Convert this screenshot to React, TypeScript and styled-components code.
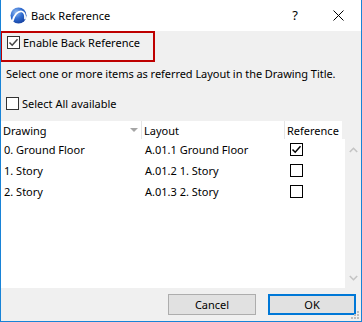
import styled, { createGlobalStyle } from "styled-components";

const GlobalStyle = createGlobalStyle`
    html, body {
        margin: 0;
        padding: 0;
        background: #ffffff;
    }
    body {
        font-family: "Noto Sans", "Open Sans", sans-serif;
        font-size: 11px;
        line-height: 15px;
        color: #000000;
    }
`;

const rows = [
    { drawing: "0. Ground Floor", layout: "A.01.1 Ground Floor", checked: true },
    { drawing: "1. Story", layout: "A.01.2 1. Story", checked: false },
    { drawing: "2. Story", layout: "A.01.3 2. Story", checked: false },
];

function Logo() {
    return (
        <svg width="17" height="17" viewBox="0 0 17 17">
            <defs>
                <radialGradient id="lg" cx="0.35" cy="0.3" r="0.8">
                    <stop offset="0" stopColor="#8fb8ef" />
                    <stop offset="0.5" stopColor="#2f6bd0" />
                    <stop offset="1" stopColor="#123c9a" />
                </radialGradient>
            </defs>
            <circle cx="8.5" cy="8.5" r="8" fill="url(#lg)" />
            <path d="M2.5 14.5 C4 8 8 3.5 12 4.5 C14.5 5.2 15.2 8.5 15 11.5" fill="none" stroke="#ffffff" strokeWidth="1.8" strokeLinecap="round" />
        </svg>
    );
}

function CheckMark({ color }: { color: string }) {
    return (
        <svg width="11" height="11" viewBox="0 0 11 11">
            <path d="M1.5 5.5 L4.2 8.2 L9.5 2.2" fill="none" stroke={color} strokeWidth="1.5" />
        </svg>
    );
}

export default function App() {
    return (
        <>
            <GlobalStyle />
            <Window>
                <TitleBar>
                    <Logo />
                    <Title>Back Reference</Title>
                    <TitleButtons>
                        <Help>?</Help>
                        <svg width="11" height="11" viewBox="0 0 11 11">
                            <path d="M0.5 0.5 L10.5 10.5 M10.5 0.5 L0.5 10.5" stroke="#000" strokeWidth="1" />
                        </svg>
                    </TitleButtons>
                </TitleBar>
                <Content>
                    <Highlight>
                        <CheckRow>
                            <Box $dark={false}>
                                <CheckMark color="#444" />
                            </Box>
                            <span>Enable Back Reference</span>
                        </CheckRow>
                    </Highlight>
                    <Description>Select one or more items as referred Layout in the Drawing Title.</Description>
                    <CheckRow $top={15}>
                        <Box $dark={false} />
                        <span>Select All available</span>
                    </CheckRow>
                    <Table>
                        <HeaderRow>
                            <HeaderCell $w={141}>
                                Drawing
                                <SortArrow />
                            </HeaderCell>
                            <HeaderCell $w={143}>Layout</HeaderCell>
                            <HeaderCell $w={57}>Reference</HeaderCell>
                        </HeaderRow>
                        <BodyWrap>
                            <Body>
                                {rows.map((r) => (
                                    <Row key={r.drawing}>
                                        <Cell $w={141}>{r.drawing}</Cell>
                                        <Cell $w={143}>{r.layout}</Cell>
                                        <RefCell>
                                            <Box $dark>
                                                {r.checked && <CheckMark color="#000" />}
                                            </Box>
                                        </RefCell>
                                    </Row>
                                ))}
                            </Body>
                            <ScrollBar>
                                <svg width="9" height="6" viewBox="0 0 9 6">
                                    <path d="M0.8 5 L4.5 1.3 L8.2 5" fill="none" stroke="#c4c4c4" strokeWidth="1.6" />
                                </svg>
                                <svg width="9" height="6" viewBox="0 0 9 6">
                                    <path d="M0.8 1 L4.5 4.7 L8.2 1" fill="none" stroke="#c4c4c4" strokeWidth="1.6" />
                                </svg>
                            </ScrollBar>
                        </BodyWrap>
                    </Table>
                    <Footer>
                        <Button $primary={false}>Cancel</Button>
                        <Button $primary>OK</Button>
                        <Grip>
                            <svg width="9" height="9" viewBox="0 0 9 9">
                                <rect x="6" y="0" width="2" height="2" fill="#bdbdbd" />
                                <rect x="3" y="3" width="2" height="2" fill="#bdbdbd" />
                                <rect x="6" y="3" width="2" height="2" fill="#bdbdbd" />
                                <rect x="0" y="6" width="2" height="2" fill="#bdbdbd" />
                                <rect x="3" y="6" width="2" height="2" fill="#bdbdbd" />
                                <rect x="6" y="6" width="2" height="2" fill="#bdbdbd" />
                            </svg>
                        </Grip>
                    </Footer>
                </Content>
            </Window>
        </>
    );
}

const Window = styled.div`
    width: 362px;
    height: 322px;
    box-sizing: border-box;
    border: 1px solid #1883d7;
    border-top: none;
    display: flex;
    flex-direction: column;
    background: #ffffff;
    overflow: hidden;
`;

const TitleBar = styled.div`
    height: 31px;
    flex: none;
    display: flex;
    align-items: center;
    padding-left: 9px;
    background: #ffffff;
`;

const Title = styled.span`
    margin-left: 4px;
    font-size: 11px;
    color: #000;
`;

const TitleButtons = styled.div`
    margin-left: auto;
    display: flex;
    align-items: center;
    gap: 35px;
    padding-right: 17px;
`;

const Help = styled.span`
    font-size: 13px;
`;

const Content = styled.div`
    flex: 1;
    display: flex;
    flex-direction: column;
    background: #f0f0f0;
    position: relative;
`;

const Highlight = styled.div`
    width: 155px;
    height: 31px;
    flex: none;
    box-sizing: border-box;
    margin-left: -1px;
    border: 2px solid #be0000;
    padding: 3px 0 0 5px;
`;

const CheckRow = styled.div<{ $top?: number }>`
    display: flex;
    align-items: center;
    gap: 3px;
    height: 13px;
    margin-top: ${(p) => p.$top ?? 0}px;
    margin-left: ${(p) => (p.$top ? 5 : 0)}px;
    white-space: nowrap;
`;

const Box = styled.div<{ $dark: boolean }>`
    width: 13px;
    height: 13px;
    box-sizing: border-box;
    border: 1px solid ${(p) => (p.$dark ? "#000000" : "#333333")};
    background: #ffffff;
    display: flex;
    align-items: center;
    justify-content: center;
    flex: none;
`;

const Description = styled.div`
    margin: 4px 0 0 5px;
    line-height: 16px;
    height: 16px;
    white-space: nowrap;
    letter-spacing: -0.05px;
`;

const Table = styled.div`
    margin-top: 11px;
    display: flex;
    flex-direction: column;
    flex: none;
`;

const HeaderRow = styled.div`
    display: flex;
    height: 18px;
`;

const HeaderCell = styled.div<{ $w: number }>`
    width: ${(p) => p.$w}px;
    background: #ffffff;
    border-right: 1px solid #e5e5e5;
    display: flex;
    align-items: center;
    padding-left: 2px;
    box-sizing: border-box;
    white-space: nowrap;
    &:last-child {
        border-right: none;
    }
`;

const SortArrow = styled.span`
    margin-left: auto;
    margin-right: 3px;
    width: 0;
    height: 0;
    border-left: 4px solid transparent;
    border-right: 4px solid transparent;
    border-top: 4px solid #a5a5a5;
`;

const BodyWrap = styled.div`
    display: flex;
    height: 149px;
`;

const Body = styled.div`
    width: 344px;
    background: #ffffff;
    display: flex;
    flex-direction: column;
`;

const Row = styled.div`
    display: flex;
    height: 21px;
    align-items: center;
`;

const Cell = styled.div<{ $w: number }>`
    width: ${(p) => p.$w}px;
    padding-left: 3px;
    box-sizing: border-box;
    white-space: nowrap;
`;

const RefCell = styled.div`
    padding-left: 5px;
`;

const ScrollBar = styled.div`
    width: 16px;
    display: flex;
    flex-direction: column;
    justify-content: space-between;
    align-items: center;
    padding: 8px 0 7px;
`;

const Footer = styled.div`
    flex: 1;
    display: flex;
    justify-content: flex-end;
    align-items: flex-start;
    gap: 12px;
    padding: 6px 5px 0 0;
`;

const Button = styled.button<{ $primary: boolean }>`
    width: 88px;
    height: 21px;
    box-sizing: border-box;
    background: #e1e1e1;
    border: ${(p) => (p.$primary ? "2px solid #0078d7" : "1px solid #adadad")};
    font-family: "Noto Sans", "Open Sans", sans-serif;
    font-size: 11px;
    color: #000;
    padding: 0;
`;

const Grip = styled.div`
    position: absolute;
    right: 1px;
    bottom: 1px;
    line-height: 0;
`;
